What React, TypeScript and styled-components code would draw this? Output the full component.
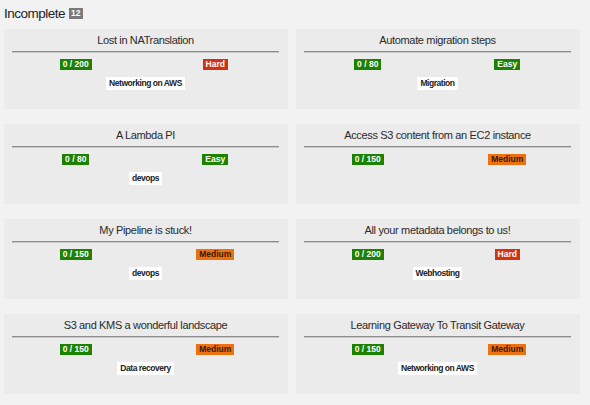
import React from "react";
import styled, { createGlobalStyle } from "styled-components";

const Global = createGlobalStyle`
  html, body { margin: 0; padding: 0; background: #f2f2f2; }
  body { font-family: "Liberation Sans", Arial, sans-serif; color: #222; }
`;

const Page = styled.div`
  width: 590px;
  height: 405px;
  overflow: hidden;
  box-sizing: border-box;
  padding: 4px 10px 0 4px;
`;

const Heading = styled.h2`
  margin: 0;
  display: flex;
  align-items: center;
  gap: 4px;
  font-size: 13.5px;
  letter-spacing: -0.5px;
  font-weight: 400;
  color: #222;
  height: 18px;
`;

const Count = styled.span`
  display: inline-block;
  background: #7a7a7a;
  color: #fff;
  font-size: 8.5px;
  letter-spacing: 0;
  font-weight: 700;
  padding: 0 2px;
  line-height: 11px;
`;

const Grid = styled.div`
  margin-top: 7px;
  display: grid;
  grid-template-columns: 284px 284px;
  column-gap: 8px;
  row-gap: 15px;
`;

const Card = styled.div`
  background: #ebebeb;
  height: 80px;
  box-sizing: border-box;
  padding: 4px 9px 0 8px;
  display: flex;
  flex-direction: column;
  align-items: stretch;
`;

const Title = styled.div`
  text-align: center;
  font-size: 11px;
  letter-spacing: -0.35px;
  color: #2a2a2a;
  line-height: 14px;
  height: 14px;
`;

const Rule = styled.div`
  margin-top: 4px;
  height: 0;
  border-top: 1px solid #8c8c8c;
  border-bottom: 1px solid #c8c8c8;
`;

const BadgeRow = styled.div`
  margin: 6px -6px 0;
  display: grid;
  grid-template-columns: 1fr 1fr;
`;

const Cell = styled.div`
  display: flex;
  justify-content: center;
`;

const Tag = styled.span<{ $bg: string; $fg: string }>`
  background: ${(p) => p.$bg};
  color: ${(p) => p.$fg};
  font-size: 8.5px;
  font-weight: 700;
  line-height: 11px;
  padding: 0 3px;
`;

const Category = styled.div`
  margin-top: 7px;
  align-self: center;
  background: #fff;
  color: #222;
  font-size: 8.5px;
  letter-spacing: -0.45px;
  font-weight: 700;
  line-height: 11px;
  padding: 1px 3px;
`;

type Level = "Easy" | "Medium" | "Hard";
const levelColors: Record<Level, { bg: string; fg: string }> = {
  Easy: { bg: "#1d8102", fg: "#fff" },
  Medium: { bg: "#ec7211", fg: "#3a1a00" },
  Hard: { bg: "#d13212", fg: "#fff" },
};

const items: { title: string; score: string; level: Level; cat: string }[] = [
  { title: "Lost in NATranslation", score: "0 / 200", level: "Hard", cat: "Networking on AWS" },
  { title: "Automate migration steps", score: "0 / 80", level: "Easy", cat: "Migration" },
  { title: "A Lambda PI", score: "0 / 80", level: "Easy", cat: "devops" },
  { title: "Access S3 content from an EC2 instance", score: "0 / 150", level: "Medium", cat: "" },
  { title: "My Pipeline is stuck!", score: "0 / 150", level: "Medium", cat: "devops" },
  { title: "All your metadata belongs to us!", score: "0 / 200", level: "Hard", cat: "Webhosting" },
  { title: "S3 and KMS a wonderful landscape", score: "0 / 150", level: "Medium", cat: "Data recovery" },
  { title: "Learning Gateway To Transit Gateway", score: "0 / 150", level: "Medium", cat: "Networking on AWS" },
];

export default function App() {
  return (
    <Page>
      <Global />
      <Heading>
        Incomplete <Count>12</Count>
      </Heading>
      <Grid>
        {items.map((it) => (
          <Card key={it.title}>
            <Title>{it.title}</Title>
            <Rule />
            <BadgeRow>
              <Cell>
                <Tag $bg="#1d8102" $fg="#fff">{it.score}</Tag>
              </Cell>
              <Cell>
                <Tag $bg={levelColors[it.level].bg} $fg={levelColors[it.level].fg}>{it.level}</Tag>
              </Cell>
            </BadgeRow>
            {it.cat && <Category>{it.cat}</Category>}
          </Card>
        ))}
      </Grid>
    </Page>
  );
}
